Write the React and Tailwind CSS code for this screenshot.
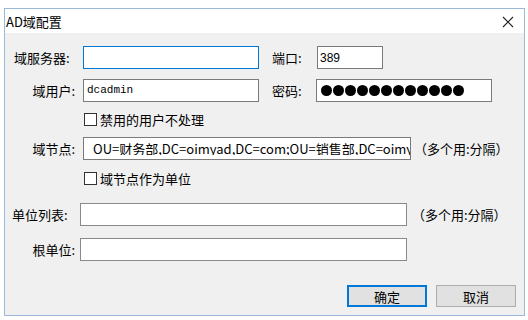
import React from 'react';

const font = { fontFamily: '"Noto Sans CJK SC", "Noto Sans", sans-serif' };

function Label({ children, className = '' }) {
  return <div className={`shrink-0 text-[13px] leading-none text-black ${className}`}>{children}</div>;
}

function Box({ className = '', children }) {
  return (
    <div className={`h-[23px] shrink-0 bg-white border flex items-center overflow-hidden whitespace-nowrap ${className}`}>
      {children}
    </div>
  );
}

function Check({ label }) {
  return (
    <div className="flex items-center h-[13px] ml-[79px]">
      <div className="w-[13px] h-[13px] border border-[#333] bg-white" />
      <span className="ml-[3px] text-[13px] leading-none text-black">{label}</span>
    </div>
  );
}

function Button({ children, primary }) {
  return (
    <div
      className={`w-[80px] h-[22px] flex items-center justify-center text-[13px] leading-none bg-[#e1e1e1] ${
        primary ? 'border-2 border-[#0078d7]' : 'border border-[#adadad]'
      }`}
    >
      {children}
    </div>
  );
}

export default function App() {
  const dots = Array.from({ length: 12 });
  return (
    <div className="w-[528px] h-[320px] bg-white pt-[8px] pl-[4px]" style={font}>
      <div className="w-[521px] h-[308px] border border-[#9bb8d9] flex flex-col">
        {/* title bar */}
        <div className="h-[24px] bg-white flex items-center justify-between pl-[1px] pr-[10px]">
          <span className="text-[13px] leading-none text-black">AD域配置</span>
          <svg width="12" height="12" viewBox="0 0 12 12" className="mt-[1px]">
            <path d="M1 1 L11 11 M11 1 L1 11" stroke="#222" strokeWidth="1.1" fill="none" />
          </svg>
        </div>

        {/* body */}
        <div className="flex-1 bg-[#f0f0f0] pt-[13px] flex flex-col">
          <div className="flex items-center">
            <Label className="w-[71px] pl-[9px]">域服务器:</Label>
            <Box className="ml-[7px] w-[176px] border-[#0078d7]" />
            <Label className="ml-[13px] w-[45px]">端口:</Label>
            <Box className="w-[66px] border-[#7a7a7a] pl-[2px]">
              <span className="text-[12px] leading-none" style={{ fontFamily: '"Liberation Sans", sans-serif' }}>389</span>
            </Box>
          </div>

          <div className="flex items-center mt-[10px]">
            <Label className="w-[70px] text-right">域用户:</Label>
            <Box className="ml-[8px] w-[176px] border-[#7a7a7a] pl-[3px]">
              <span className="text-[11px] leading-none" style={{ fontFamily: '"Liberation Mono", monospace' }}>dcadmin</span>
            </Box>
            <Label className="ml-[13px] w-[44px]">密码:</Label>
            <Box className="w-[176px] border-[#7a7a7a] pl-[4px] gap-[1px]">
              {dots.map((_, i) => (
                <div key={i} className="w-[11px] h-[11px] rounded-full bg-black" />
              ))}
            </Box>
          </div>

          <div className="mt-[11px]">
            <Check label="禁用的用户不处理" />
          </div>

          <div className="flex items-center mt-[11px]">
            <Label className="w-[70px] text-right">域节点:</Label>
            <Box className="ml-[8px] w-[328px] border-[#7a7a7a] pl-[9px]">
              <span className="text-[13px] leading-none overflow-hidden">OU=财务部,DC=oimyad,DC=com;OU=销售部,DC=oimy</span>
            </Box>
            <Label className="ml-[3px]">（多个用:分隔）</Label>
          </div>

          <div className="mt-[12px]">
            <Check label="域节点作为单位" />
          </div>

          <div className="flex items-center mt-[18px]">
            <Label className="w-[71px] pl-[7px]">单位列表:</Label>
            <Box className="ml-[4px] w-[327px] border-[#8a8a8a]" />
            <Label className="ml-[5px]">（多个用:分隔）</Label>
          </div>

          <div className="flex items-center mt-[12px]">
            <Label className="w-[70px] text-right">根单位:</Label>
            <Box className="ml-[5px] w-[327px] border-[#8a8a8a]" />
          </div>

          <div className="flex justify-end gap-[9px] mt-[24px] pr-[8px]">
            <Button primary>确定</Button>
            <Button>取消</Button>
          </div>
        </div>
      </div>
    </div>
  );
}
